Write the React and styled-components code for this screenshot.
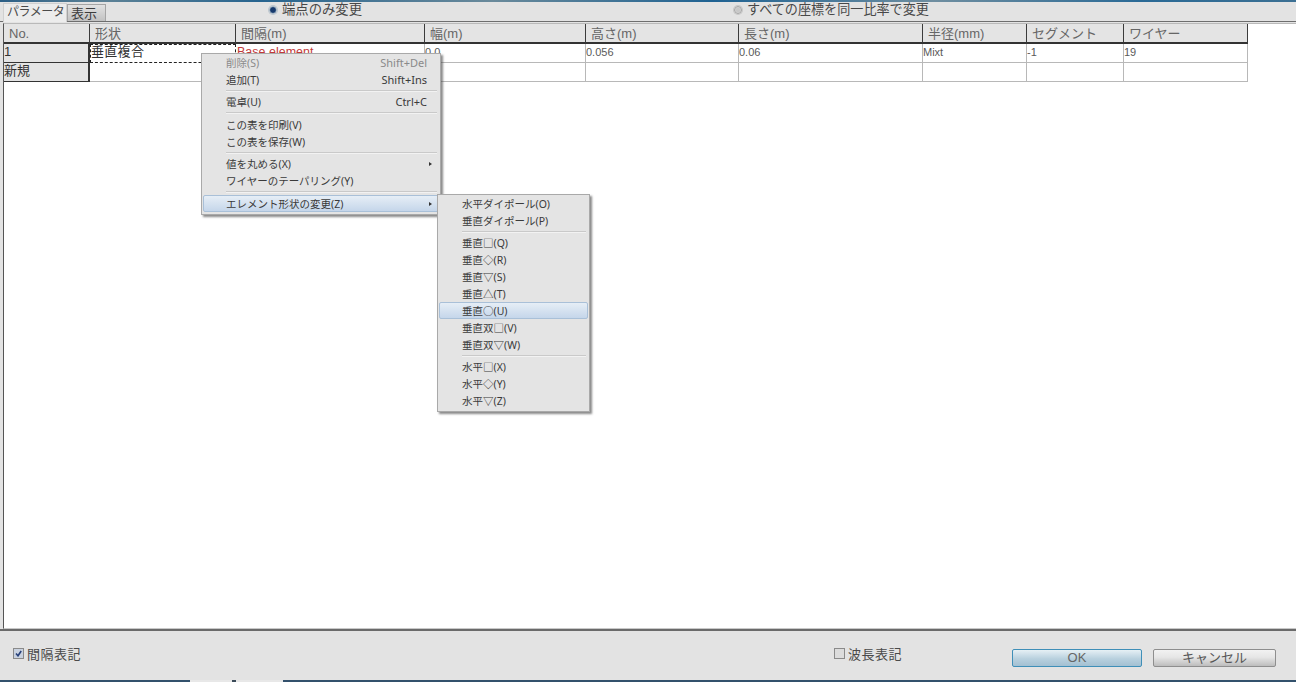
import React from "react";
import styled, { createGlobalStyle } from "styled-components";

const Global = createGlobalStyle`
  html, body { margin: 0; padding: 0; background: #e3e3e3; }
  body { font-family: "Liberation Sans", "Noto Sans CJK JP", sans-serif; overflow: hidden; }
`;

const Page = styled.div`
  position: relative;
  width: 1296px;
  height: 682px;
  display: flex;
  flex-direction: column;
  overflow: hidden;
  background: #e3e3e3;
`;
const TopStrip = styled.div`
  height: 2px;
  flex: none;
  background: linear-gradient(90deg, #2c5f86, #5d8296 8%, #27648f 20%, #6a8a9b 38%, #1f6292 55%, #6f8ea0 72%, #2a6a96 88%, #3c7093);
`;
const TabBar = styled.div`
  height: 19px;
  flex: none;
  display: flex;
  align-items: flex-end;
  padding-left: 3px;
  position: relative;
  border-bottom: 1px solid #6e6e6e;
`;
const Tab = styled.div`
  width: ${p => p.$w}px;
  height: ${p => (p.$active ? 19 : 17)}px;
  box-sizing: border-box;
  font-size: ${p => (p.$active ? 12 : 13)}px;
  letter-spacing: ${p => (p.$active ? -0.5 : 0)}px;
  line-height: ${p => (p.$active ? 17 : 18)}px;
  padding-left: 3px;
  white-space: nowrap;
  color: ${p => (p.$active ? "#4a4a4a" : "#3c3c3c")};
  background: ${p => (p.$active ? "#ececec" : "linear-gradient(#e2e2e2, #c2c2c2)")};
  border: 1px solid ${p => (p.$active ? "#d0d0d0" : "#a5a5a5")};
  border-bottom: none;
  margin-bottom: ${p => (p.$active ? -1 : 0)}px;
  z-index: ${p => (p.$active ? 1 : 0)};
`;
const RadioRow = styled.div`
  display: flex;
  align-items: center;
  gap: 5px;
  font-size: ${p => p.$size}px;
  color: #484848;
  height: 16px;
  line-height: 16px;
  white-space: nowrap;
  position: absolute;
  top: 0;
  left: ${p => p.$left}px;
`;
const RadioMark = styled.span`
  width: 8px;
  height: 8px;
  border-radius: 50%;
  box-sizing: border-box;
  border: 1px solid ${p => (p.$on ? "#9fb0bf" : "#a5a5a5")};
  background: ${p => (p.$on ? "radial-gradient(circle, #173a6e 0 55%, #3e6a98 100%)" : "radial-gradient(circle, #c8c8c8 0 45%, #eee 100%)")};
  box-shadow: 0 0 0 1px ${p => (p.$on ? "#bcc6cf" : "#c8c8c8")};
  flex: none;
`;
const GridArea = styled.div`
  flex: 1;
  min-height: 0;
  margin-left: 3px;
  margin-top: 1px;
  background: #fff;
  border-left: 1px solid #555;
  border-top: 1px solid #b9b9b9;
  border-bottom: 1px solid #c8c8c8;
  box-sizing: border-box;
`;
const Row = styled.div`
  display: grid;
  grid-template-columns: 86px 146px 189px 161px 153px 184px 104px 97px 124px;
  width: 1244px;
  height: ${p => p.$h}px;
`;
const HeadCell = styled.div`
  background: #e4e4e4;
  border-right: 1px solid #3c3c3c;
  border-bottom: 2px solid #333;
  box-sizing: border-box;
  font-size: 13px;
  line-height: 17px;
  padding-top: 1px;
  color: #666;
  padding-left: 5px;
  white-space: nowrap;
`;
const RowHead = styled.div`
  background: #e4e4e4;
  border-right: 2px solid #333;
  border-bottom: 1px solid #333;
  box-sizing: border-box;
  font-size: 13px;
  line-height: 15px;
  color: #333;
`;
const Cell = styled.div`
  border-right: 1px solid #b8b8b8;
  border-bottom: 1px solid #b8b8b8;
  box-sizing: border-box;
  font-size: ${p => p.$size || 11}px;
  line-height: 16px;
  padding-left: ${p => p.$pad || 0}px;
  color: ${p => p.$color || "#5a5a5a"};
  white-space: nowrap;
  overflow: hidden;
`;
const ActiveCell = styled.div`
  border: 1px dashed #222;
  box-sizing: border-box;
  font-size: 13px;
  line-height: 14px;
  color: #333;
  letter-spacing: 0.3px;
`;
const Footer = styled.div`
  height: 51px;
  flex: none;
  border-top: 2px solid #6a6a6a;
  box-sizing: border-box;
  display: flex;
  align-items: center;
  padding: 0 20px 0 13px;
  background: #e3e3e3;
`;
const BottomStrip = styled.div`
  height: 2px;
  flex: none;
  background: linear-gradient(90deg, #33516c 0 190px, #e8e8e8 190px 232px, #3a4a58 232px 236px, #e8e8e8 236px 283px, #33516c 283px);
`;
const CheckRow = styled.label`
  display: flex;
  align-items: center;
  gap: 3px;
  font-size: 13px;
  color: #4a4a4a;
  letter-spacing: 0.5px;
  width: ${p => p.$w}px;
  flex: none;
  height: 18px;
  position: relative;
  top: -2px;
`;
const CheckBox = styled.span`
  width: 9px;
  height: 9px;
  border: 1px solid #8a8a8a;
  background: ${p => (p.$on ? "#c9d2e0" : "#dcdcdc")};
  flex: none;
  display: flex;
  align-items: center;
  justify-content: center;
`;
const OkButton = styled.div`
  width: 130px;
  height: 18px;
  box-sizing: border-box;
  border: 1px solid #3f8fb8;
  border-radius: 2px;
  background: linear-gradient(#e6f0f5, #b8d0de 55%, #a3c0d2);
  text-align: center;
  font-size: 13px;
  line-height: 16px;
  color: #666;
  flex: none;
  margin-top: 5px;
`;
const CancelButton = styled.div`
  width: 123px;
  height: 18px;
  box-sizing: border-box;
  border: 1px solid #8e8e8e;
  border-radius: 2px;
  background: linear-gradient(#f2f2f2, #e6e6e6 45%, #bdbdbd);
  text-align: center;
  font-size: 13px;
  line-height: 16px;
  color: #555;
  flex: none;
  margin-left: 11px;
  margin-top: 5px;
`;
const Menu = styled.div`
  position: absolute;
  left: ${p => p.$left}px;
  top: ${p => p.$top}px;
  width: ${p => p.$w}px;
  box-sizing: border-box;
  background: #e4e4e4;
  border: 1px solid #a9a9a9;
  box-shadow: 2px 2px 2px rgba(60, 60, 60, 0.6);
  padding: 0 1px 2px 1px;
  font-family: "Noto Sans", "Noto Sans CJK JP", sans-serif;
  font-size: 10.5px;
  z-index: 5;
`;
const Item = styled.div`
  height: 17px;
  line-height: 16px;
  box-sizing: border-box;
  display: flex;
  justify-content: space-between;
  align-items: center;
  padding: 0 12px 0 ${p => p.$pad}px;
  color: ${p => (p.$off ? "#8a8a8a" : "#3a3a3a")};
  white-space: nowrap;
  position: relative;
  ${p => p.$hot && `
    background: linear-gradient(#e6eef6, #c5d6ea);
    border: 1px solid #a9c0d8;
    border-radius: 2px;
    padding-left: ${p.$pad - 1}px;
    padding-right: 11px;
  `}
`;
const Shortcut = styled.span`
  font-size: 11px;
`;
const Sep = styled.div`
  height: 1px;
  background: #c9c9c9;
  border-bottom: 1px solid #f2f2f2;
  margin: ${p => p.$space}px 2px ${p => p.$space}px ${p => p.$pad}px;
  box-sizing: content-box;
`;
const Arrow = styled.span`
  width: 0;
  height: 0;
  border-left: 3px solid #333;
  border-top: 2.5px solid transparent;
  border-bottom: 2.5px solid transparent;
  margin-right: -5px;
`;

const heads = ["No.", "形状", "間隔(m)", "幅(m)", "高さ(m)", "長さ(m)", "半径(mm)", "セグメント", "ワイヤー"];

const ctx = [
  { t: "削除(S)", k: "Shift+Del", off: true },
  { t: "追加(T)", k: "Shift+Ins" },
  "-",
  { t: "電卓(U)", k: "Ctrl+C" },
  "-",
  { t: "この表を印刷(V)" },
  { t: "この表を保存(W)" },
  "-",
  { t: "値を丸める(X)", sub: true },
  { t: "ワイヤーのテーパリング(Y)" },
  "-",
  { t: "エレメント形状の変更(Z)", sub: true, hot: true },
];
const sub = [
  { t: "水平ダイポール(O)" },
  { t: "垂直ダイポール(P)" },
  "-",
  { t: "垂直□(Q)" },
  { t: "垂直◇(R)" },
  { t: "垂直▽(S)" },
  { t: "垂直△(T)" },
  { t: "垂直○(U)", hot: true },
  { t: "垂直双□(V)" },
  { t: "垂直双▽(W)" },
  "-",
  { t: "水平□(X)" },
  { t: "水平◇(Y)" },
  { t: "水平▽(Z)" },
];

const MenuList = ({ items, pad, space }) =>
  items.map((it, i) =>
    it === "-" ? (
      <Sep key={i} $pad={pad} $space={space} />
    ) : (
      <Item key={i} $pad={pad} $off={it.off} $hot={it.hot}>
        <span>{it.t}</span>
        {it.k && <Shortcut>{it.k}</Shortcut>}
        {it.sub && <Arrow />}
      </Item>
    )
  );

export default function App() {
  return (
    <Page>
      <Global />
      <TopStrip />
      <TabBar>
        <Tab $active $w={64}>パラメータ</Tab>
        <Tab $w={39}>表示</Tab>
        <RadioRow $left={269} $size={13.33}><RadioMark $on />端点のみ変更</RadioRow>
        <RadioRow $left={734} $size={13.1}><RadioMark />すべての座標を同一比率で変更</RadioRow>
      </TabBar>
      <GridArea>
        <Row $h={20}>
          {heads.map((t, i) => (
            <HeadCell key={i}>{t}</HeadCell>
          ))}
        </Row>
        <Row $h={19}>
          <RowHead>1</RowHead>
          <ActiveCell>垂直複合</ActiveCell>
          <Cell $color="#c23a3a" $size={12.5} $pad={1}>Base element</Cell>
          <Cell>0.0</Cell>
          <Cell>0.056</Cell>
          <Cell>0.06</Cell>
          <Cell>Mixt</Cell>
          <Cell>-1</Cell>
          <Cell>19</Cell>
        </Row>
        <Row $h={19}>
          <RowHead>新規</RowHead>
          <Cell /><Cell /><Cell /><Cell /><Cell /><Cell /><Cell /><Cell />
        </Row>
      </GridArea>
      <Footer>
        <CheckRow $w={821}>
          <CheckBox $on>
            <svg width="7" height="7" viewBox="0 0 7 7">
              <path d="M1 3.5 L3 5.8 L6.2 1" fill="none" stroke="#27407a" strokeWidth="1.6" />
            </svg>
          </CheckBox>
          間隔表記
        </CheckRow>
        <CheckRow $w={178}>
          <CheckBox />
          波長表記
        </CheckRow>
        <OkButton>OK</OkButton>
        <CancelButton>キャンセル</CancelButton>
      </Footer>
      <BottomStrip />
      <Menu $left={201} $top={53} $w={240}>
        <MenuList items={ctx} pad={23} space={1.75} />
      </Menu>
      <Menu $left={437} $top={194} $w={153}>
        <MenuList items={sub} pad={23} space={1.5} />
      </Menu>
    </Page>
  );
}
